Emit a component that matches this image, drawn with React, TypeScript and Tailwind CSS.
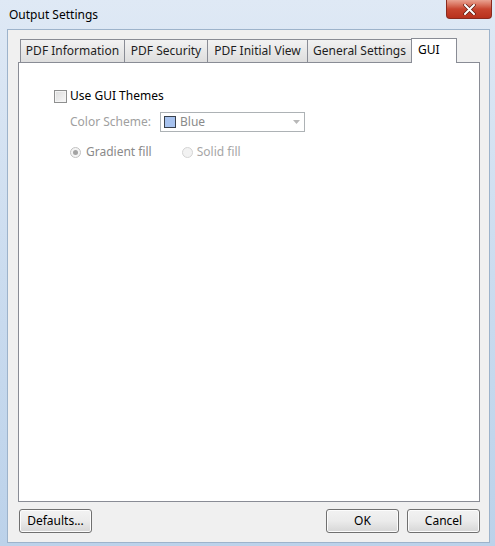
const font = "font-['Segoe_UI','Noto_Sans','Liberation_Sans',sans-serif]";

const tabs = [
  { label: 'PDF Information', w: 'w-[105px]' },
  { label: 'PDF Security', w: 'w-[84px]' },
  { label: 'PDF Initial View', w: 'w-[101px]' },
  { label: 'General Settings', w: 'w-[105px]' },
];

const Button = ({ label, className = '' }: { label: string; className?: string }) => (
  <button
    className={`h-[24px] w-[73px] rounded-[3px] border border-[#707070] bg-gradient-to-b from-[#f2f2f2] via-[#ebebeb] to-[#d6d6d6] text-[12px] text-black shadow-[inset_0_0_0_1px_#fcfcfc] ${className}`}
  >
    {label}
  </button>
);

export default function App() {
  return (
    <div
      className={`${font} w-[495px] h-[546px] flex flex-col bg-gradient-to-b from-[#dfe9f5] via-[#cbdcef] to-[#bcd2ea] overflow-hidden`}
    >
      {/* Title bar */}
      <div className="h-[29px] flex items-start justify-between pl-[9px] pr-[3px]">
        <span className="mt-[6px] text-[12px] text-black">Output Settings</span>
        <div className="w-[46px] h-[19px] rounded-b-[4px] border border-t-0 border-[#8a2a1e] bg-gradient-to-b from-[#e9a291] via-[#c8452f] to-[#b8311d] flex items-center justify-center">
          <svg width="13" height="11" viewBox="0 0 13 11">
            <path d="M2 1 L11 10 M11 1 L2 10" stroke="#5a1a10" strokeWidth="3.4" strokeLinecap="round" />
            <path d="M2 1 L11 10 M11 1 L2 10" stroke="#ffffff" strokeWidth="2" strokeLinecap="round" />
          </svg>
        </div>
      </div>

      {/* Client area */}
      <div className="flex-1 ml-[7px] mr-[5px] mb-[3px] bg-[#f0f0f0] border border-[#9db3cb] flex flex-col pl-[10px] pr-[9px] pt-[7px]">
        {/* Tabs */}
        <div className="flex items-end h-[25px] pl-[2px]">
          {tabs.map((t) => (
            <div
              key={t.label}
              className={`${t.w} h-[23px] -mr-px border border-b-0 border-[#898c95] bg-gradient-to-b from-[#f2f2f2] to-[#dedede] text-[12px] text-[#1e1e1e] flex items-center justify-center`}
            >
              {t.label}
            </div>
          ))}
          <div className="w-[46px] h-[25px] border border-b-0 border-[#898c95] bg-white text-[12px] text-black pl-[6px] pt-[2px] relative top-px z-10">
            GUI
          </div>
        </div>

        {/* Panel */}
        <div className="h-[440px] bg-white border border-[#898c95] pl-[35px] pt-[26px]">
          <label className="flex items-center gap-[3px] h-[14px]">
            <span className="w-[13px] h-[13px] border border-[#8e8f8f] bg-gradient-to-br from-[#dcdcdc] to-[#f8f8f8] shadow-[inset_0_0_0_1px_#f4f4f4]" />
            <span className="text-[12px] text-black">Use GUI Themes</span>
          </label>

          <div className="flex items-center mt-[9px] ml-[16px] h-[20px]">
            <span className="text-[12px] text-[#a0a0a0] w-[90px]">Color Scheme:</span>
            <div className="w-[145px] h-[20px] border border-[#adb2b5] bg-white flex items-center pl-[3px]">
              <span className="w-[12px] h-[12px] border border-[#39414d] bg-[#a7c2ee]" />
              <span className="ml-[4px] text-[12px] text-[#8a8a8a]">Blue</span>
              <svg className="ml-auto mr-[4px]" width="7" height="4" viewBox="0 0 7 4">
                <path d="M0 0 H7 L3.5 4 Z" fill="#b8b8b8" />
              </svg>
            </div>
          </div>

          <div className="flex items-center mt-[12px] ml-[16px] h-[16px]">
            <span className="w-[11px] h-[11px] rounded-full border border-[#c2c2c2] bg-[#f4f4f4] flex items-center justify-center">
              <span className="w-[5px] h-[5px] rounded-full bg-[#a3a3a3]" />
            </span>
            <span className="ml-[5px] text-[12px] text-[#8a8a8a]">Gradient fill</span>
            <span className="ml-[30px] w-[11px] h-[11px] rounded-full border border-[#d4d4d4] bg-[#f2f2f2]" />
            <span className="ml-[4px] text-[12px] text-[#a6a6a6]">Solid fill</span>
          </div>
        </div>

        {/* Buttons */}
        <div className="flex items-center mt-[7px] pl-px">
          <Button label="Defaults..." />
          <Button label="OK" className="ml-auto" />
          <Button label="Cancel" className="ml-[8px]" />
        </div>
      </div>
    </div>
  );
}
